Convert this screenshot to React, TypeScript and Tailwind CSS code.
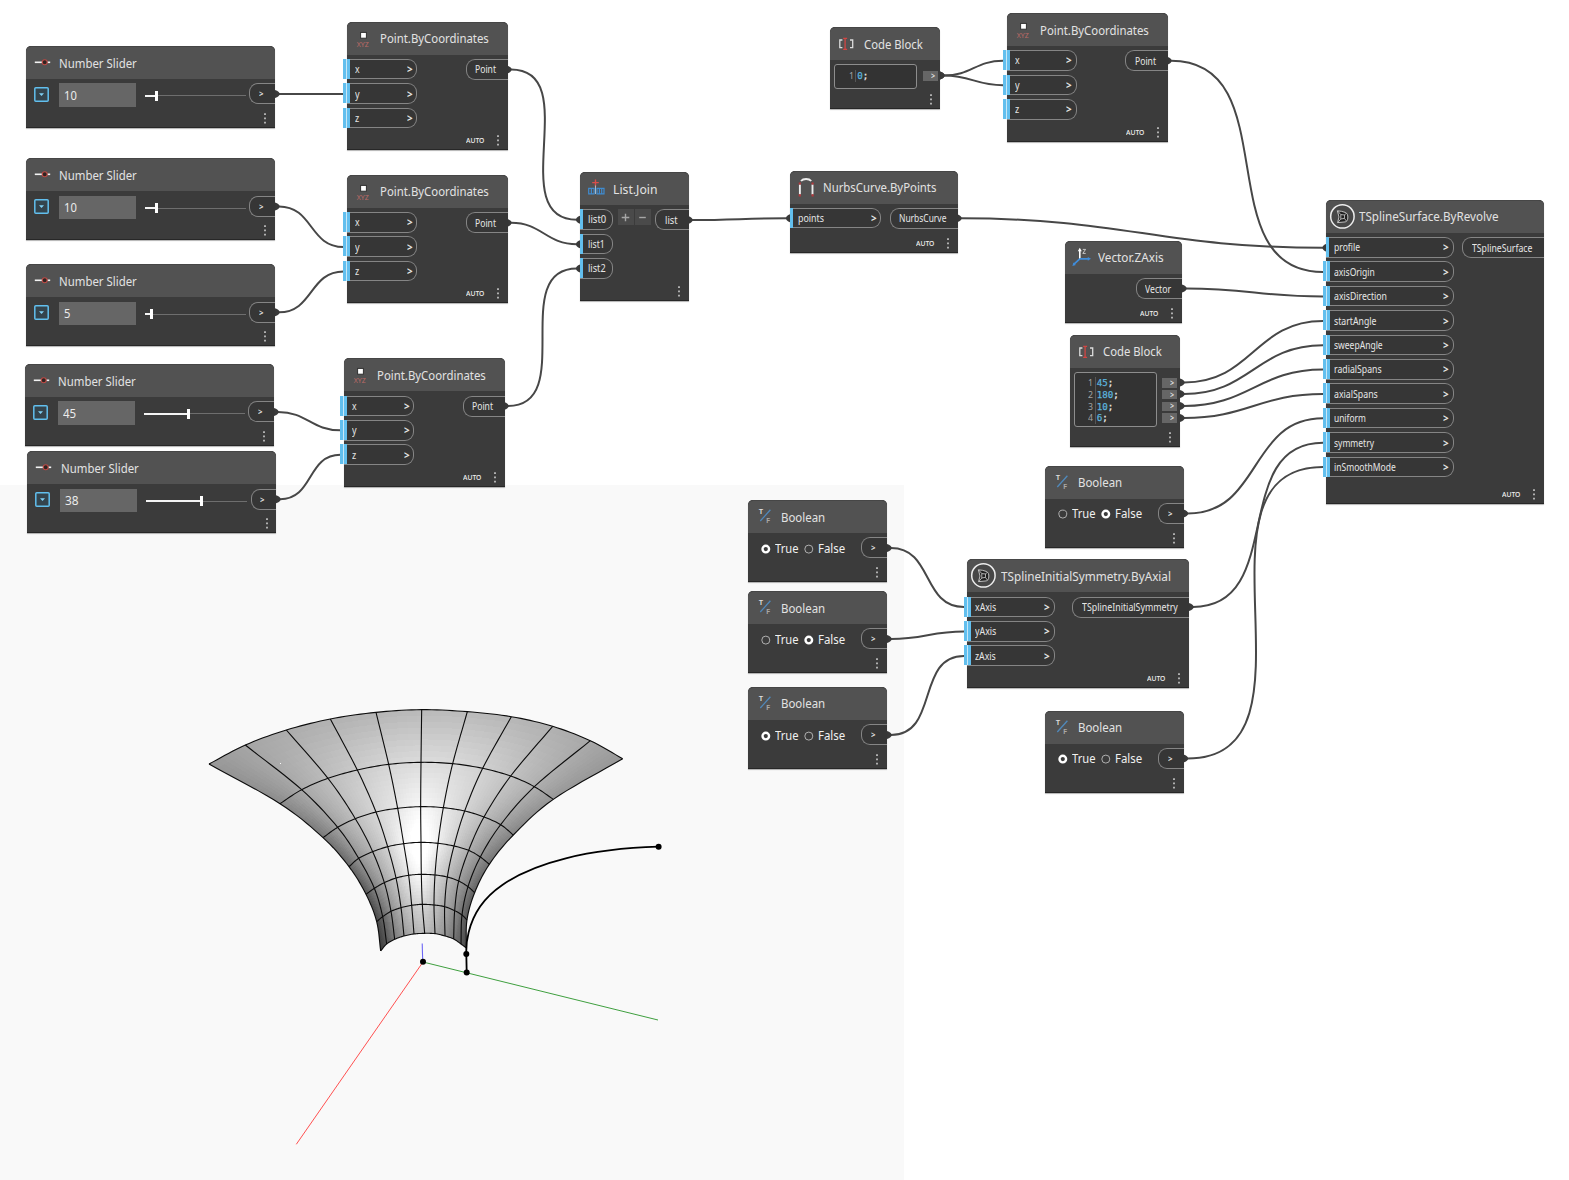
import { useLayoutEffect, useRef, useState, type ReactNode } from "react";

/* ---------- text that is squeezed to a given width ---------- */

function Fit({ w, children, className = "" }: { w: number; children: string; className?: string }) {
  const ref = useRef<HTMLSpanElement>(null);
  const [scale, setScale] = useState(1);
  useLayoutEffect(() => {
    if (ref.current && ref.current.offsetWidth > 0) {
      const range = document.createRange();
      range.selectNodeContents(ref.current);
      const natural = range.getBoundingClientRect().width / scale;
      setScale(w / natural);
    }
  }, [w, children]);
  return (
    <span className={"block flex-none whitespace-nowrap " + className} style={{ width: w }}>
      <span ref={ref} className="inline-block origin-left" style={{ transform: `scaleX(${scale})` }}>
        {children}
      </span>
    </span>
  );
}

/* ---------- icons (33 x 33 header slot) ---------- */

type IconName = "slider" | "point" | "list" | "nurbs" | "code" | "vector" | "tspline" | "bool";

function Icon({ name }: { name: IconName }) {
  return (
    <svg className="h-[33px] w-[33.3px] flex-none" viewBox="0 0 33.3 33" fill="none">
      {name === "slider" && (
        <>
          <path d="M8.8 16.3H24.2" stroke="#f2f2f2" strokeWidth="1.6" />
          <circle cx="18.7" cy="16.3" r="2.5" fill="#2f2422" stroke="#bd4a45" strokeWidth="1.1" />
        </>
      )}
      {name === "point" && (
        <>
          <rect x="13.6" y="10.4" width="5.8" height="5.8" fill="#fff" stroke="#303030" strokeWidth="1" />
          <text x="9.8" y="24.6" fontSize="6.8" textLength="12" lengthAdjust="spacingAndGlyphs" fill="#bd6a67">
            XYZ
          </text>
        </>
      )}
      {name === "list" && (
        <>
          <path d="M15.5 7.4v7M12.2 10.6h6.6" stroke="#d84e4a" strokeWidth="1.4" />
          <path d="M15.5 13.5v8.5" stroke="#a9bccb" strokeWidth="1" />
          <path d="M8.7 16.4h5.4v5.4H8.7zM11.4 16.4v5.4M17 16.4h7v5.4h-7zM19.4 16.4v5.4M21.7 16.4v5.4" stroke="#3f8bcf" strokeWidth="1.2" />
        </>
      )}
      {name === "nurbs" && (
        <>
          <path d="M9.9 23.4V13.6M22.5 23.4V13.6" stroke="#ededed" strokeWidth="1.9" />
          <path d="M11 10C13.2 7.4 19 7.4 21.2 10" stroke="#ededed" strokeWidth="1.9" />
          <path d="M8.7 11.4h2.2v2.2H8.7zM21.5 11.4h2.2v2.2h-2.2zM8.7 23.2h2.2v2.2H8.7zM21.5 23.2h2.2v2.2h-2.2z" fill="#b3393d" />
        </>
      )}
      {name === "code" && (
        <>
          <path d="M12.4 13h-2.6v7.6h2.6M20 13h2.7v7.6H20" stroke="#dcdcdc" strokeWidth="1.3" />
          <path d="M13.2 11.3h3.9M13.2 22.3h3.9M15.1 11.3v11" stroke="#d24643" strokeWidth="1.3" />
        </>
      )}
      {name === "vector" && (
        <>
          <path d="M14.8 17.8V9" stroke="#fff" strokeWidth="1.6" />
          <path d="M12.8 10.2 14.8 6.8l2 3.4z" fill="#fff" />
          <path d="M14.8 17.8H24M14.8 17.8 9 23.2" stroke="#3f8ddb" strokeWidth="1.7" />
          <path d="M22.8 15.9 26 17.8l-3.2 1.9zM7.4 25l1-3.4 2.5 2.4z" fill="#3f8ddb" />
          <path d="M17.8 8.4h2.8l-2.8 4h2.9" stroke="#d5d5d5" strokeWidth="0.9" />
        </>
      )}
      {name === "tspline" && (
        <>
          <circle cx="16.4" cy="16.4" r="11.7" fill="#474747" stroke="#ececec" strokeWidth="1.5" />
          <path d="M11.4 10.8C14 11 17 11.4 19.2 12.4 21.4 13.4 22 15 21.8 18 21.6 20.4 21 21.4 19.2 21.9L11.6 22.6 13 17Z" fill="#1f1f1f" stroke="#cfcfcf" strokeWidth="0.9" />
          <path d="M14.8 14.6 18.6 15 18.4 18.4 14.8 19ZM11.6 10.9l3.2 3.7M18.6 15l1.6-1.8M18.4 18.4l2 2.6M14.8 19 11.8 22.5" stroke="#d0d0d0" strokeWidth="0.8" />
        </>
      )}
      {name === "bool" && (
        <>
          <path d="M12.3 21 22.4 9.8" stroke="#5089bb" strokeWidth="1.3" />
          <text x="10.8" y="14" fontSize="7.6" fontWeight="600" textLength="4.4" lengthAdjust="spacingAndGlyphs" fill="#dedede">T</text>
          <text x="18" y="23.4" fontSize="7.6" fontWeight="600" textLength="4.2" lengthAdjust="spacingAndGlyphs" fill="#a9a9a9">F</text>
        </>
      )}
    </svg>
  );
}

/* ---------- ports ---------- */

type PortDef = { label: string; w: number; solid?: boolean };

function InPort({ port, width, arrow }: { port: PortDef; width: number; arrow: boolean }) {
  return (
    <div
      className="relative flex h-[20.6px] items-center rounded-r-[9px] border border-l-0 border-[#858585] bg-[#363636] pl-2 pr-[3.6px] text-[10px] leading-none text-[#e6e6e6]"
      style={{ width }}
    >
      {port.solid ? (
        <span className="absolute -top-px left-0 h-[20px] w-[3px] bg-[#62bfee]" />
      ) : (
        <span className="absolute -top-px -left-[3.6px] flex h-[20px] w-[7px] justify-between bg-[#c9e8f8]">
          <span className="w-[3px] bg-[#62bfee]" />
          <span className="w-[3px] bg-[#62bfee]" />
        </span>
      )}
      <Fit w={port.w}>{port.label}</Fit>
      {arrow && <Fit w={5.6} className="ml-auto font-bold">{">"}</Fit>}
    </div>
  );
}

function OutPort({ width, label, w }: { width: number; label: string; w: number }) {
  return (
    <div
      className="flex h-[21px] flex-none items-center rounded-l-[9px] border border-r-0 border-[#858585] bg-[#363636] pl-[8.7px] text-[10px] leading-none text-[#e6e6e6]"
      style={{ width }}
    >
      {label === ">" ? <Fit w={4.4} className="text-[9px] font-semibold">{label}</Fit> : <Fit w={w}>{label}</Fit>}
    </div>
  );
}

/* ---------- node shell ---------- */

type NodeProps = {
  x: number;
  y: number;
  w: number;
  h: number;
  icon: IconName;
  title: string;
  tw: number;
  auto?: boolean;
  children: ReactNode;
};

function Node({ x, y, w, h, icon, title, tw, auto, children }: NodeProps) {
  return (
    <section
      className="absolute flex flex-col rounded-t-[5px] bg-[#3b3b3b] shadow-[0_1px_1px_rgba(0,0,0,0.3)]"
      style={{ left: x, top: y, width: w, height: h }}
    >
      <header className="flex h-[33px] flex-none items-center rounded-t-[5px] border-t border-[#464646] bg-[#525252] pb-px">
        <Icon name={icon} />
        <Fit w={tw} className="text-[13px] leading-[18px] text-[#e2e2e2]">{title}</Fit>
      </header>
      <div className="flex items-start justify-between pt-[4.2px]">{children}</div>
      <footer className="mt-auto flex h-[19px] flex-none items-center justify-end pr-[8.8px]">
        {auto && <Fit w={18.4} className="mr-[12.8px] text-[7px] leading-none font-medium text-[#f0f0f0]">AUTO</Fit>}
        <svg className="h-[11px] w-[2px]" viewBox="0 0 2 11">
          <path d="M.2.3h1.6v1.6H.2zM.2 4.6h1.6v1.6H.2zM.2 8.8h1.6v1.6H.2z" fill="#cecece" />
        </svg>
      </footer>
      <span className="absolute inset-x-0 bottom-0 h-px bg-[#272727]" />
    </section>
  );
}

function Inputs({ ports, width, arrow = true }: { ports: PortDef[]; width: number; arrow?: boolean }) {
  return (
    <div className="flex flex-col gap-[3.8px]">
      {ports.map((p) => (
        <InPort key={p.label} port={p} width={width} arrow={arrow} />
      ))}
    </div>
  );
}

/* ---------- node kinds ---------- */

function SliderNode({ x, y, value, vw, pos }: { x: number; y: number; value: string; vw: number; pos: number }) {
  return (
    <Node x={x} y={y} w={249} h={82} icon="slider" title="Number Slider" tw={77.8}>
      <div className="flex w-full items-start pl-2">
        <svg className="mt-[3.6px] size-[15px] flex-none" viewBox="0 0 15 15">
          <rect x="0.8" y="0.8" width="13.4" height="13.4" rx="1" fill="#34444d" stroke="#62bfee" strokeWidth="1.5" />
          <path d="M5 6.2h5L7.5 9z" fill="#7fd0f5" />
        </svg>
        <span className="ml-[10px] flex h-[23.6px] w-[77px] items-center bg-[#666] pt-[0.8px] pl-[4.6px] text-[13px] leading-none text-[#ececec]">
          <Fit w={vw}>{value}</Fit>
        </span>
        <span className="relative mt-[12px] ml-[8.6px] h-px w-[101px] bg-[#6e6e6e]">
          <span className="absolute -top-[0.5px] left-0 h-[2px] bg-[#f4f4f4]" style={{ width: pos }} />
          <span className="absolute -top-[4.6px] h-[10px] w-[3.2px] bg-white" style={{ left: pos }} />
        </span>
        <span className="ml-auto"><OutPort width={25.8} label=">" w={4} /></span>
      </div>
    </Node>
  );
}

function PointNode({ x, y }: { x: number; y: number }) {
  return (
    <Node x={x} y={y} w={161} h={128.6} icon="point" title="Point.ByCoordinates" tw={108.8} auto>
      <Inputs width={70} ports={[{ label: "x", w: 4.6 }, { label: "y", w: 4.6 }, { label: "z", w: 4.2 }]} />
      <OutPort width={42.5} label="Point" w={21} />
    </Node>
  );
}

function Radio({ on }: { on: boolean }) {
  return (
    <svg className="size-[10px] flex-none" viewBox="0 0 10 10" fill="none">
      {on ? (
        <circle cx="4.8" cy="5.1" r="3.3" stroke="#fff" strokeWidth="2.4" />
      ) : (
        <circle cx="4.8" cy="5.1" r="4" stroke="#b0b0b0" strokeWidth="1" />
      )}
    </svg>
  );
}

function BoolNode({ x, y, value }: { x: number; y: number; value: boolean }) {
  return (
    <Node x={x} y={y} w={138.7} h={82} icon="bool" title="Boolean" tw={44.2}>
      <div className="flex h-[23px] items-center pl-[12.8px] text-[12px] leading-none text-[#f0f0f0]">
        <Radio on={value} />
        <Fit w={23.5} className="ml-[4.2px]">True</Fit>
        <span className="ml-[5.4px] flex"><Radio on={!value} /></span>
        <Fit w={27.2} className="ml-[4.2px]">False</Fit>
      </div>
      <OutPort width={25.4} label=">" w={4} />
    </Node>
  );
}

function CodeNode({ x, y, h, lines }: { x: number; y: number; h: number; lines: string[] }) {
  const single = lines.length === 1;
  return (
    <Node x={x} y={y} w={110} h={h} icon="code" title="Code Block" tw={58.8}>
      <div
        className={
          "ml-[3.8px] flex w-[83px] flex-col rounded-[3px] border border-[#8d8d8d] bg-[#333] " +
          (single ? "h-[24.6px] pt-[4.6px]" : "h-[55px] pt-[3.7px]")
        }
      >
        {lines.map((l, i) => (
          <div key={i} className="flex h-[11.8px] items-center pl-[13.6px] text-[9px] leading-none">
            <Fit w={5} className="text-[#a4a4a4]">{String(i + 1)}</Fit>
            <span className="mr-[0.8px] ml-[1.6px] h-full w-px bg-[#565656]" />
            <span className="flex font-['DejaVu_Sans_Mono',monospace] text-[9.2px] [-webkit-text-stroke-width:0.25px]">
              <span className="text-[#5cb3de]">{l}</span>
              <span className="text-[#f0f0f0]">;</span>
            </span>
          </div>
        ))}
      </div>
      <div className={"mr-[2.7px] flex flex-col gap-[2.2px] " + (single ? "mt-[6.6px]" : "mt-[6px]")}>
        {lines.map((_, i) => (
          <span key={i} className="flex h-[9.6px] w-[14.8px] items-center justify-end bg-[#666] pr-[3.2px] text-[8px] leading-none font-semibold text-[#e8e8e8]">
            <Fit w={4}>{">"}</Fit>
          </span>
        ))}
      </div>
    </Node>
  );
}

/* ---------- wires ---------- */

// x1, y1, x2, y2 and whether the end has its own round stub
const WIRES: [number, number, number, number, boolean?][] = [
  [279, 93.9, 343.5, 93.9],
  [279, 206.5, 343.5, 247],
  [279, 312.3, 343.5, 271.5],
  [278, 412, 340.5, 430.3],
  [280, 499.3, 340.5, 454.8],
  [511, 69.6, 577, 219.8, true],
  [511, 222.8, 577, 244.2, true],
  [508, 406, 577, 268.5, true],
  [692, 220, 787, 218.3, true],
  [961, 218.3, 1323.5, 247.8, true],
  [944, 75.5, 1003, 60.8],
  [944, 75.5, 1003, 85.2],
  [1171, 60.8, 1323, 272],
  [1186, 288.5, 1323, 296.5],
  [1184, 382.4, 1323, 321],
  [1184, 394, 1323, 345.2],
  [1184, 406, 1323, 369.6],
  [1184, 418, 1323, 394],
  [1187.5, 513.5, 1323, 418.3],
  [1193, 607, 1323, 442.7],
  [1187.5, 758.5, 1323, 467],
  [891, 548, 964, 607],
  [891, 639, 964, 631.5],
  [891, 735, 964, 656],
];

function Wires() {
  return (
    <svg className="absolute inset-0" width="1569" height="1180" fill="none">
      {WIRES.map(([x1, y1, x2, y2, stub], i) => {
        const d = 0.45 * Math.hypot(x2 - x1, y2 - y1);
        return (
          <g key={i}>
            <path d={`M${x1 - 2} ${y1}H${x1}C${x1 + d} ${y1} ${x2 - d} ${y2} ${x2} ${y2}`} stroke="#474747" strokeWidth="2" />
            <path d={`M${x1 - 4} ${y1 - 4}q4.6 1.4 4.6 4t-4.6 4z`} fill="#3a3a3a" />
            {stub && <path d={`M${x2 + 3} ${y2 - 4}q-4 1.4 -4 4t4 4z`} fill="#3a3a3a" />}
          </g>
        );
      })}
    </svg>
  );
}

/* ---------- 3D preview ---------- */

type P = [number, number];

// Grid vertices of the revolved surface, in thirds of a pixel
const GRID: P[][] = [
  [[57, 222], [166, 165], [289, 120], [421, 87], [558, 67], [695, 59], [832, 65], [964, 80], [1088, 109], [1201, 152], [1298, 206]],
  [[270, 341], [335, 299], [414, 265], [502, 240], [596, 223], [693, 217], [788, 221], [878, 235], [962, 258], [1033, 290], [1090, 328]],
  [[399, 443], [443, 412], [496, 386], [558, 366], [623, 355], [692, 350], [760, 353], [824, 363], [882, 381], [932, 404], [970, 435]],
  [[477, 530], [506, 505], [548, 485], [593, 470], [641, 461], [693, 457], [744, 460], [792, 468], [836, 481], [871, 501], [898, 523]],
  [[528, 613], [553, 595], [583, 578], [618, 564], [656, 556], [694, 553], [735, 555], [772, 561], [806, 573], [834, 590], [854, 608]],
  [[560, 695], [578, 680], [603, 664], [633, 653], [665, 646], [697, 643], [732, 645], [764, 650], [794, 662], [816, 675], [831, 690]],
  [[572, 783], [590, 762], [614, 748], [642, 738], [672, 732], [704, 730], [735, 731], [765, 738], [791, 747], [813, 762], [829, 774]],
];

const SHADE: number[][] = [
  [152, 165, 172, 177, 181, 185, 186, 182, 176, 168, 152],
  [138, 168, 188, 202, 213, 219, 217, 208, 194, 175, 150],
  [118, 160, 190, 213, 231, 246, 232, 212, 188, 162, 132],
  [102, 146, 180, 210, 244, 262, 238, 205, 174, 144, 114],
  [84, 128, 164, 198, 230, 246, 216, 188, 158, 128, 96],
  [70, 102, 142, 176, 202, 212, 194, 168, 140, 108, 84],
  [58, 84, 120, 152, 174, 186, 170, 146, 118, 90, 70],
];

const clampIdx = (v: number, n: number) => Math.max(0, Math.min(n - 1, v));

function cr(a: number, b: number, c: number, d: number, t: number) {
  return 0.5 * (2 * b + (c - a) * t + (2 * a - 5 * b + 4 * c - d) * t * t + (3 * b - a - 3 * c + d) * t * t * t);
}

function at(list: number[], u: number) {
  const n = list.length;
  const i = Math.min(Math.floor(u), n - 2);
  const first = i === 0 ? 2 * list[0] - list[1] : list[i - 1];
  const last = i + 2 > n - 1 ? 2 * list[n - 1] - list[n - 2] : list[clampIdx(i + 2, n)];
  return cr(first, list[i], list[i + 1], last, u - i);
}

function surf(r: number, c: number): P {
  return [
    190 + at(GRID.map((row) => at(row.map((p) => p[0]), c)), r) / 3,
    690 + at(GRID.map((row) => at(row.map((p) => p[1]), c)), r) / 3,
  ];
}

const fmt = (pts: P[]) => pts.map((p) => p[0].toFixed(2) + "," + p[1].toFixed(2)).join(" ");
const steps = (n: number, k: number) => Array.from({ length: n * k + 1 }, (_, i) => i / k);

function Surface() {
  const K = 9;
  const rows = steps(6, K);
  const cols = steps(10, K);
  const pts = rows.map((r) => cols.map((c) => surf(r, c)));
  const cells: ReactNode[] = [];
  for (let i = 0; i < rows.length - 1; i++) {
    for (let j = 0; j < cols.length - 1; j++) {
      const r = rows[i] + 0.5 / K;
      const c = cols[j] + 0.5 / K;
      const g = Math.round(Math.min(255, at(SHADE.map((row) => at(row, c)), r)));
      const color = `rgb(${g},${g},${g})`;
      cells.push(
        <polygon key={i + "-" + j} points={fmt([pts[i][j], pts[i][j + 1], pts[i + 1][j + 1], pts[i + 1][j]])} fill={color} />,
      );
    }
  }
  return (
    <g>
      <g shapeRendering="crispEdges">{cells}</g>
      <g fill="none" stroke="#0c0c0c" strokeWidth="1.1">
        {Array.from({ length: 7 }, (_, r) => <polyline key={"r" + r} points={fmt(pts[r * K])} />)}
        {Array.from({ length: 11 }, (_, c) => <polyline key={"c" + c} points={fmt(pts.map((row) => row[c * K]))} />)}
      </g>
    </g>
  );
}

function Preview() {
  return (
    <svg className="absolute inset-0" width="1569" height="1180" fill="none">
      <path d="M423 962 296.3 1144.3" stroke="#ff5050" strokeWidth="1" />
      <path d="M423 962 658 1020" stroke="#3f9f3f" strokeWidth="1" />
      <path d="M422.2 943.5 422.7 961" stroke="#6c66f5" strokeWidth="1.1" />
      <Surface />
      <path d="M466.7 972.5 466.3 954C466 946 466.9 939 468.6 932.5C473.5 912 484 897.5 502 885.2C534 862.6 588 848.8 658.6 846.7" stroke="#000" strokeWidth="1.8" />
      {[[423, 961.7], [466.3, 954], [466.7, 972.4], [658.6, 846.7]].map(([cx, cy]) => (
        <circle key={cx} cx={cx} cy={cy} r="3" fill="#000" />
      ))}
    </svg>
  );
}

/* ---------- page ---------- */

export default function App() {
  return (
    <main className="relative h-[1180px] w-[1569px] overflow-hidden bg-white font-['Noto_Sans',sans-serif]">
      <div className="absolute top-[484.5px] left-0 h-[696px] w-[904px] bg-[#f9f9f9]" />
      <Preview />
      <Wires />

      <SliderNode x={26} y={46} value="10" vw={12.8} pos={10} />
      <SliderNode x={26} y={158.4} value="10" vw={12.8} pos={10} />
      <SliderNode x={26} y={264.4} value="5" vw={6.4} pos={5.6} />
      <SliderNode x={25.2} y={364} value="45" vw={13.2} pos={43.5} />
      <SliderNode x={27.3} y={451.4} value="38" vw={13.6} pos={54} />

      <PointNode x={347} y={21.7} />
      <PointNode x={347} y={174.9} />
      <PointNode x={344} y={358.4} />
      <PointNode x={1006.6} y={13} />

      <Node x={580} y={172} w={108.5} h={128.8} icon="list" title="List.Join" tw={44.5}>
        <Inputs
          width={33.4}
          arrow={false}
          ports={[{ label: "list0", w: 18.2, solid: true }, { label: "list1", w: 16.8, solid: true }, { label: "list2", w: 17.6, solid: true }]}
        />
        <span className="mt-[0.3px] ml-[-0.2px] flex gap-px">
          <i className="flex h-[15.6px] w-[16px] items-center justify-center bg-[#4a4a4a]">
            <svg className="size-[9px]" viewBox="0 0 9 9"><path d="M4.5 .7v7.6M.7 4.5h7.6" stroke="#a6a6a6" strokeWidth="1.4" /></svg>
          </i>
          <i className="flex h-[15.6px] w-[16px] items-center justify-center bg-[#4a4a4a]">
            <svg className="size-[9px]" viewBox="0 0 9 9"><path d="M1.2 4.5h6.6" stroke="#a6a6a6" strokeWidth="1.4" /></svg>
          </i>
        </span>
        <OutPort width={33.4} label="list" w={12.5} />
      </Node>

      <Node x={789.8} y={170.6} w={167.8} h={82} icon="nurbs" title="NurbsCurve.ByPoints" tw={113.4} auto>
        <Inputs width={91.5} ports={[{ label: "points", w: 26, solid: true }]} />
        <OutPort width={68} label="NurbsCurve" w={47.4} />
      </Node>

      <CodeNode x={830.4} y={27.3} h={82} lines={["0"]} />
      <CodeNode x={1069.9} y={334.8} h={112} lines={["45", "180", "10", "6"]} />

      <Node x={1064.9} y={240.9} w={117} h={82} icon="vector" title="Vector.ZAxis" tw={65.6} auto>
        <span />
        <OutPort width={46.4} label="Vector" w={26} />
      </Node>

      <BoolNode x={1044.9} y={465.6} value={false} />
      <BoolNode x={748.2} y={500.1} value={true} />
      <BoolNode x={748.2} y={591.1} value={false} />
      <BoolNode x={748.2} y={686.9} value={true} />
      <BoolNode x={1044.9} y={710.7} value={true} />

      <Node x={967.4} y={559.4} w={221.8} h={128.6} icon="tspline" title="TSplineInitialSymmetry.ByAxial" tw={170} auto>
        <Inputs width={87.2} ports={[{ label: "xAxis", w: 21.3 }, { label: "yAxis", w: 21.3 }, { label: "zAxis", w: 20.8 }]} />
        <OutPort width={117} label="TSplineInitialSymmetry" w={95.8} />
      </Node>

      <Node x={1326.2} y={199.9} w={217.6} h={304} icon="tspline" title="TSplineSurface.ByRevolve" tw={139.5} auto>
        <Inputs
          width={127.4}
          ports={[
            { label: "profile", w: 26, solid: true },
            { label: "axisOrigin", w: 40.8 },
            { label: "axisDirection", w: 53 },
            { label: "startAngle", w: 42.4 },
            { label: "sweepAngle", w: 48.7 },
            { label: "radialSpans", w: 47.6 },
            { label: "axialSpans", w: 43.8 },
            { label: "uniform", w: 31.8 },
            { label: "symmetry", w: 40 },
            { label: "inSmoothMode", w: 61.8 },
          ]}
        />
        <OutPort width={81.6} label="TSplineSurface" w={60.4} />
      </Node>
    </main>
  );
}
